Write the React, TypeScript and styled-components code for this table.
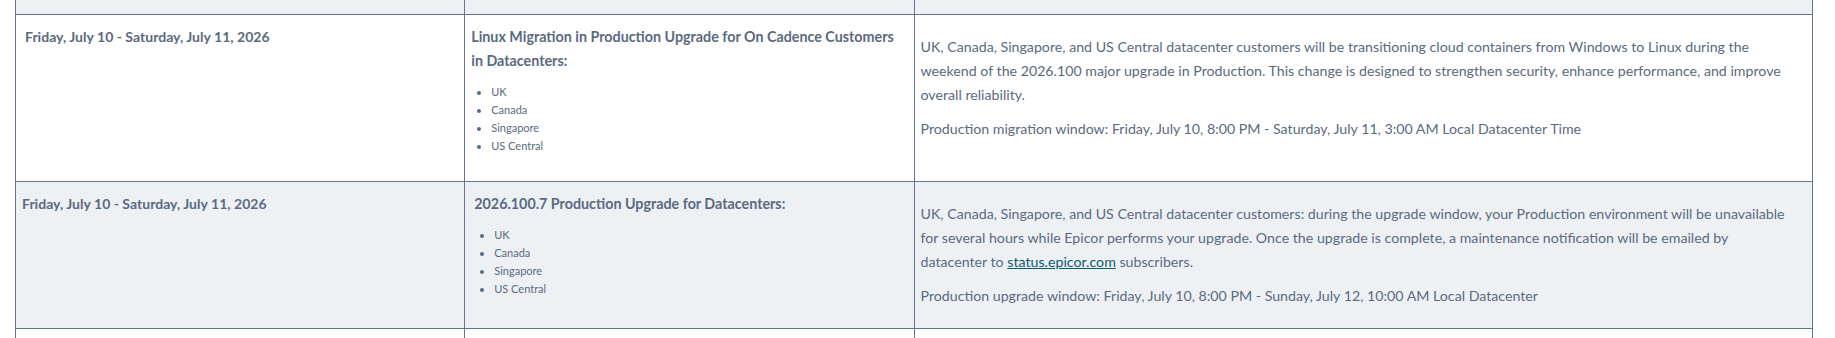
import styled, { createGlobalStyle } from 'styled-components'

const GlobalStyle = createGlobalStyle`
    html, body {
        margin: 0;
        padding: 0;
        background: #fff;
    }
    body {
        font-family: Lato, 'Open Sans', sans-serif;
        color: #5b6a80;
    }
`

const Wrapper = styled.div`
    padding-left: 15px;
    width: 1798px;
`

const Table = styled.table`
    width: 100%;
    border-collapse: collapse;
    table-layout: fixed;
`

const Row = styled.tr<{ $shade?: boolean; $height?: number }>`
    background-color: ${({ $shade }) => ($shade ? '#edf1f4' : '#fff')};
    height: ${({ $height }) => ($height ? `${$height}px` : 'auto')};
`

const Cell = styled.td<{ $padX?: number; $padRight?: number; $open?: boolean }>`
    border: 1px solid #66758f;
    ${({ $open }) => ($open ? 'border-top: none;' : '')}
    vertical-align: top;
    padding: 10px ${({ $padRight, $padX }) => $padRight ?? $padX ?? 6}px 0
        ${({ $padX }) => $padX ?? 6}px;
`

const DateText = styled.div`
    font-weight: 700;
    font-size: 14.05px;
    line-height: 24px;
`

const Title = styled.div`
    font-weight: 700;
    font-size: 14.3px;
    line-height: 24.5px;
`

const Places = styled.ul<{ $gap: number }>`
    margin: ${({ $gap }) => $gap}px 0 0;
    padding-left: 20px;
    font-size: 11px;
    line-height: 18px;

    li::marker {
        font-size: 11px;
    }
`

const Para = styled.p`
    margin: 10px 0;
    font-size: 14.2px;
    line-height: 24px;
`

const Link = styled.a`
    color: #0b5a6e;
    text-decoration: underline;
`

const datacenters = ['UK', 'Canada', 'Singapore', 'US Central']

const App = () => {
    return (
        <Wrapper>
            <GlobalStyle />
            <Table>
                <colgroup>
                    <col style={{ width: '25%' }} />
                    <col style={{ width: '25%' }} />
                    <col style={{ width: '50%' }} />
                </colgroup>
                <tbody>
                    <Row $shade $height={14}>
                        <Cell $open />
                        <Cell $open />
                        <Cell $open />
                    </Row>
                    <Row $height={167}>
                        <Cell $padX={9}>
                            <DateText>Friday, July 10 - Saturday, July 11, 2026</DateText>
                        </Cell>
                        <Cell>
                            <Title>
                                Linux Migration in Production Upgrade for On Cadence Customers in
                                Datacenters:
                            </Title>
                            <Places $gap={9}>
                                {datacenters.map((d) => (
                                    <li key={d}>{d}</li>
                                ))}
                            </Places>
                        </Cell>
                        <Cell $padRight={20}>
                            <Para>
                                UK, Canada, Singapore, and US Central datacenter customers will be
                                transitioning cloud containers from Windows to Linux during the weekend
                                of the 2026.100 major upgrade in Production. This change is designed to
                                strengthen security, enhance performance, and improve overall
                                reliability.
                            </Para>
                            <Para>
                                Production migration window: Friday, July 10, 8:00 PM - Saturday, July
                                11, 3:00 AM Local Datacenter Time
                            </Para>
                        </Cell>
                    </Row>
                    <Row $shade $height={147}>
                        <Cell>
                            <DateText>Friday, July 10 - Saturday, July 11, 2026</DateText>
                        </Cell>
                        <Cell $padX={9}>
                            <Title>2026.100.7 Production Upgrade for Datacenters:</Title>
                            <Places $gap={10}>
                                {datacenters.map((d) => (
                                    <li key={d}>{d}</li>
                                ))}
                            </Places>
                        </Cell>
                        <Cell $padRight={20}>
                            <Para>
                                UK, Canada, Singapore, and US Central datacenter customers: during the
                                upgrade window, your Production environment will be unavailable for
                                several hours while Epicor performs your upgrade. Once the upgrade is
                                complete, a maintenance notification will be emailed by datacenter to{' '}
                                <Link href="#">status.epicor.com</Link> subscribers.
                            </Para>
                            <Para>
                                Production upgrade window: Friday, July 10, 8:00 PM - Sunday, July 12,
                                10:00 AM Local Datacenter
                            </Para>
                        </Cell>
                    </Row>
                    <Row $height={40}>
                        <Cell />
                        <Cell />
                        <Cell />
                    </Row>
                </tbody>
            </Table>
        </Wrapper>
    )
}

export default App
